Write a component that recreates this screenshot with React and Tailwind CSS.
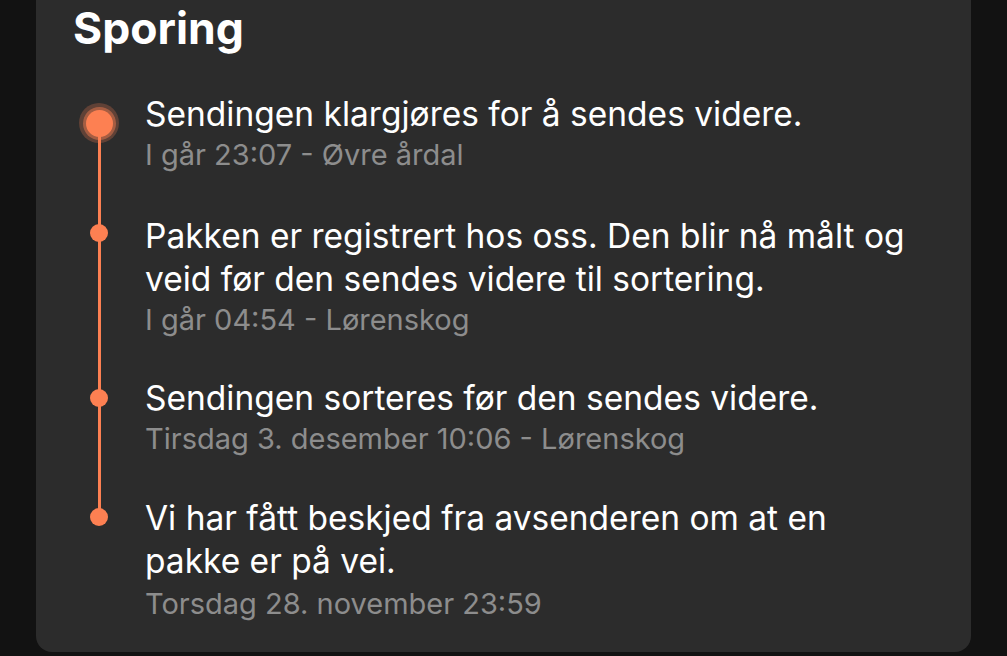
import React from "react";

const events = [
  {
    text: "Sendingen klargjøres for å sendes videre.",
    meta: "I går 23:07 - Øvre årdal",
    current: true,
    gap: "mb-[42px]",
    dot: "top-[10px]",
  },
  {
    text: "Pakken er registrert hos oss. Den blir nå målt og veid før den sendes videre til sortering.",
    meta: "I går 04:54 - Lørenskog",
    gap: "mb-[39px]",
    dot: "top-[9px]",
  },
  {
    text: "Sendingen sorteres før den sendes videre.",
    meta: "Tirsdag 3. desember 10:06 - Lørenskog",
    gap: "mb-[40px]",
    dot: "top-[12px]",
  },
  {
    text: "Vi har fått beskjed fra avsenderen om at en pakke er på vei.",
    meta: "Torsdag 28. november 23:59",
    gap: "",
    dot: "top-[11px]",
    metaGap: "mt-[2px]",
  },
];

function Dot({ current }) {
  if (current) {
    return (
      <div className="w-[40px] h-[40px] rounded-full bg-[#fd8052]/25 flex items-center justify-center">
        <div className="w-[33px] h-[33px] rounded-full bg-[#fd8052]/45 flex items-center justify-center">
          <div className="w-[27px] h-[27px] rounded-full bg-[#fd8052]" />
        </div>
      </div>
    );
  }
  return <div className="w-[18px] h-[18px] rounded-full bg-[#fd8052]" />;
}

export default function App() {
  return (
    <div
      className="h-[656px] w-[1007px] bg-[#121212] pl-[36px] pr-[36px] pb-[4px] overflow-hidden"
      style={{ fontFamily: "Inter, 'Noto Sans', sans-serif" }}
    >
      <div className="h-full bg-[#2c2c2c] rounded-b-[16px] pl-[37px] pt-[2px]">
        <h2 className="text-[44.5px] leading-[52px] font-bold text-white">Sporing</h2>
        <div className="relative mt-[39px]">
          <div className="absolute left-[24.5px] top-[30px] h-[394px] w-[3.5px] bg-[#fd8052]" />
          {events.map((e, i) => (
            <div key={i} className={"flex " + e.gap}>
              <div className="w-[72px] shrink-0 relative">
                <div
                  className={
                    (e.current ? "absolute left-[6px] " : "absolute left-[17px] ") + e.dot
                  }
                >
                  <Dot current={e.current} />
                </div>
              </div>
              <div className="w-[780px]">
                <div className="text-[33.5px] leading-[43px] text-white">{e.text}</div>
                <div className={"text-[29px] leading-[37px] text-[#8d8d8d] " + (e.metaGap || "")}>
                  {e.meta}
                </div>
              </div>
            </div>
          ))}
        </div>
      </div>
    </div>
  );
}
